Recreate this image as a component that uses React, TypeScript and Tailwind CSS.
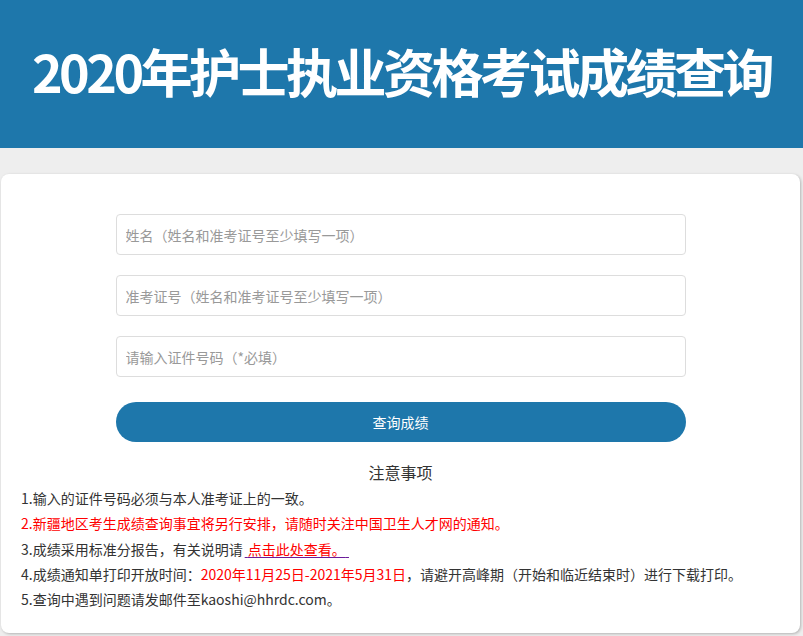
export default function App() {
    const font = { fontFamily: '"Noto Sans CJK SC", "Noto Sans", sans-serif' };

    return (
        <div className="min-h-[636px] bg-[#eeeeee]" style={font}>

            {/* Header */}
            <header className="h-[148px] bg-[#1e77ab] flex items-center justify-center">
                <h1 className="text-[52px] font-bold text-white leading-none tracking-[-3.5px] -mt-[6px]">
                    2020年护士执业资格考试成绩查询
                </h1>
            </header>

            {/* Card */}
            <div className="pt-[26px] pl-[1px] pr-[3px]">
                <div className="bg-white rounded-lg shadow-[1px_1px_3px_rgba(0,0,0,0.25)] pt-[40px] pb-[20px] h-[459px]">

                    <form className="w-[570px] mx-auto flex flex-col gap-[20px]">
                        <input
                            className="h-[41px] border border-[#dddddd] rounded px-[9px] text-sm text-[#555] placeholder:text-[#999] outline-none"
                            placeholder="姓名（姓名和准考证号至少填写一项）"
                        />
                        <input
                            className="h-[41px] border border-[#dddddd] rounded px-[9px] text-sm text-[#555] placeholder:text-[#999] outline-none"
                            placeholder="准考证号（姓名和准考证号至少填写一项）"
                        />
                        <input
                            className="h-[41px] border border-[#dddddd] rounded px-[9px] text-sm text-[#555] placeholder:text-[#999] outline-none"
                            placeholder="请输入证件号码（*必填）"
                        />
                        <button
                            type="button"
                            className="mt-[5px] h-[40px] rounded-full bg-[#1e77ab] text-white text-sm"
                        >
                            查询成绩
                        </button>
                    </form>

                    {/* Notes */}
                    <div className="mt-[18px] px-[20px] text-sm text-[#333]">
                        <h3 className="text-center text-base leading-[24px] mb-[2px]">注意事项</h3>
                        <p className="leading-[25.3px]">1.输入的证件号码必须与本人准考证上的一致。</p>
                        <p className="leading-[25.3px] text-[#ff0000]">
                            2.新疆地区考生成绩查询事宜将另行安排，请随时关注中国卫生人才网的通知。
                        </p>
                        <p className="leading-[25.3px]">
                            3.成绩采用标准分报告，有关说明请
                            <a href="#" className="ml-[2px] text-[#ff0000] underline decoration-[#6a1b9a] underline-offset-2">
                                {"\u00a0"}点击此处查看。{"\u00a0"}
                            </a>
                        </p>
                        <p className="leading-[25.3px]">
                            4.成绩通知单打印开放时间：
                            <span className="text-[#ff0000]">2020年11月25日-2021年5月31日</span>
                            ，请避开高峰期（开始和临近结束时）进行下载打印。
                        </p>
                        <p className="leading-[25.3px]">5.查询中遇到问题请发邮件至kaoshi@hhrdc.com。</p>
                    </div>

                </div>
            </div>

        </div>
    );
}
